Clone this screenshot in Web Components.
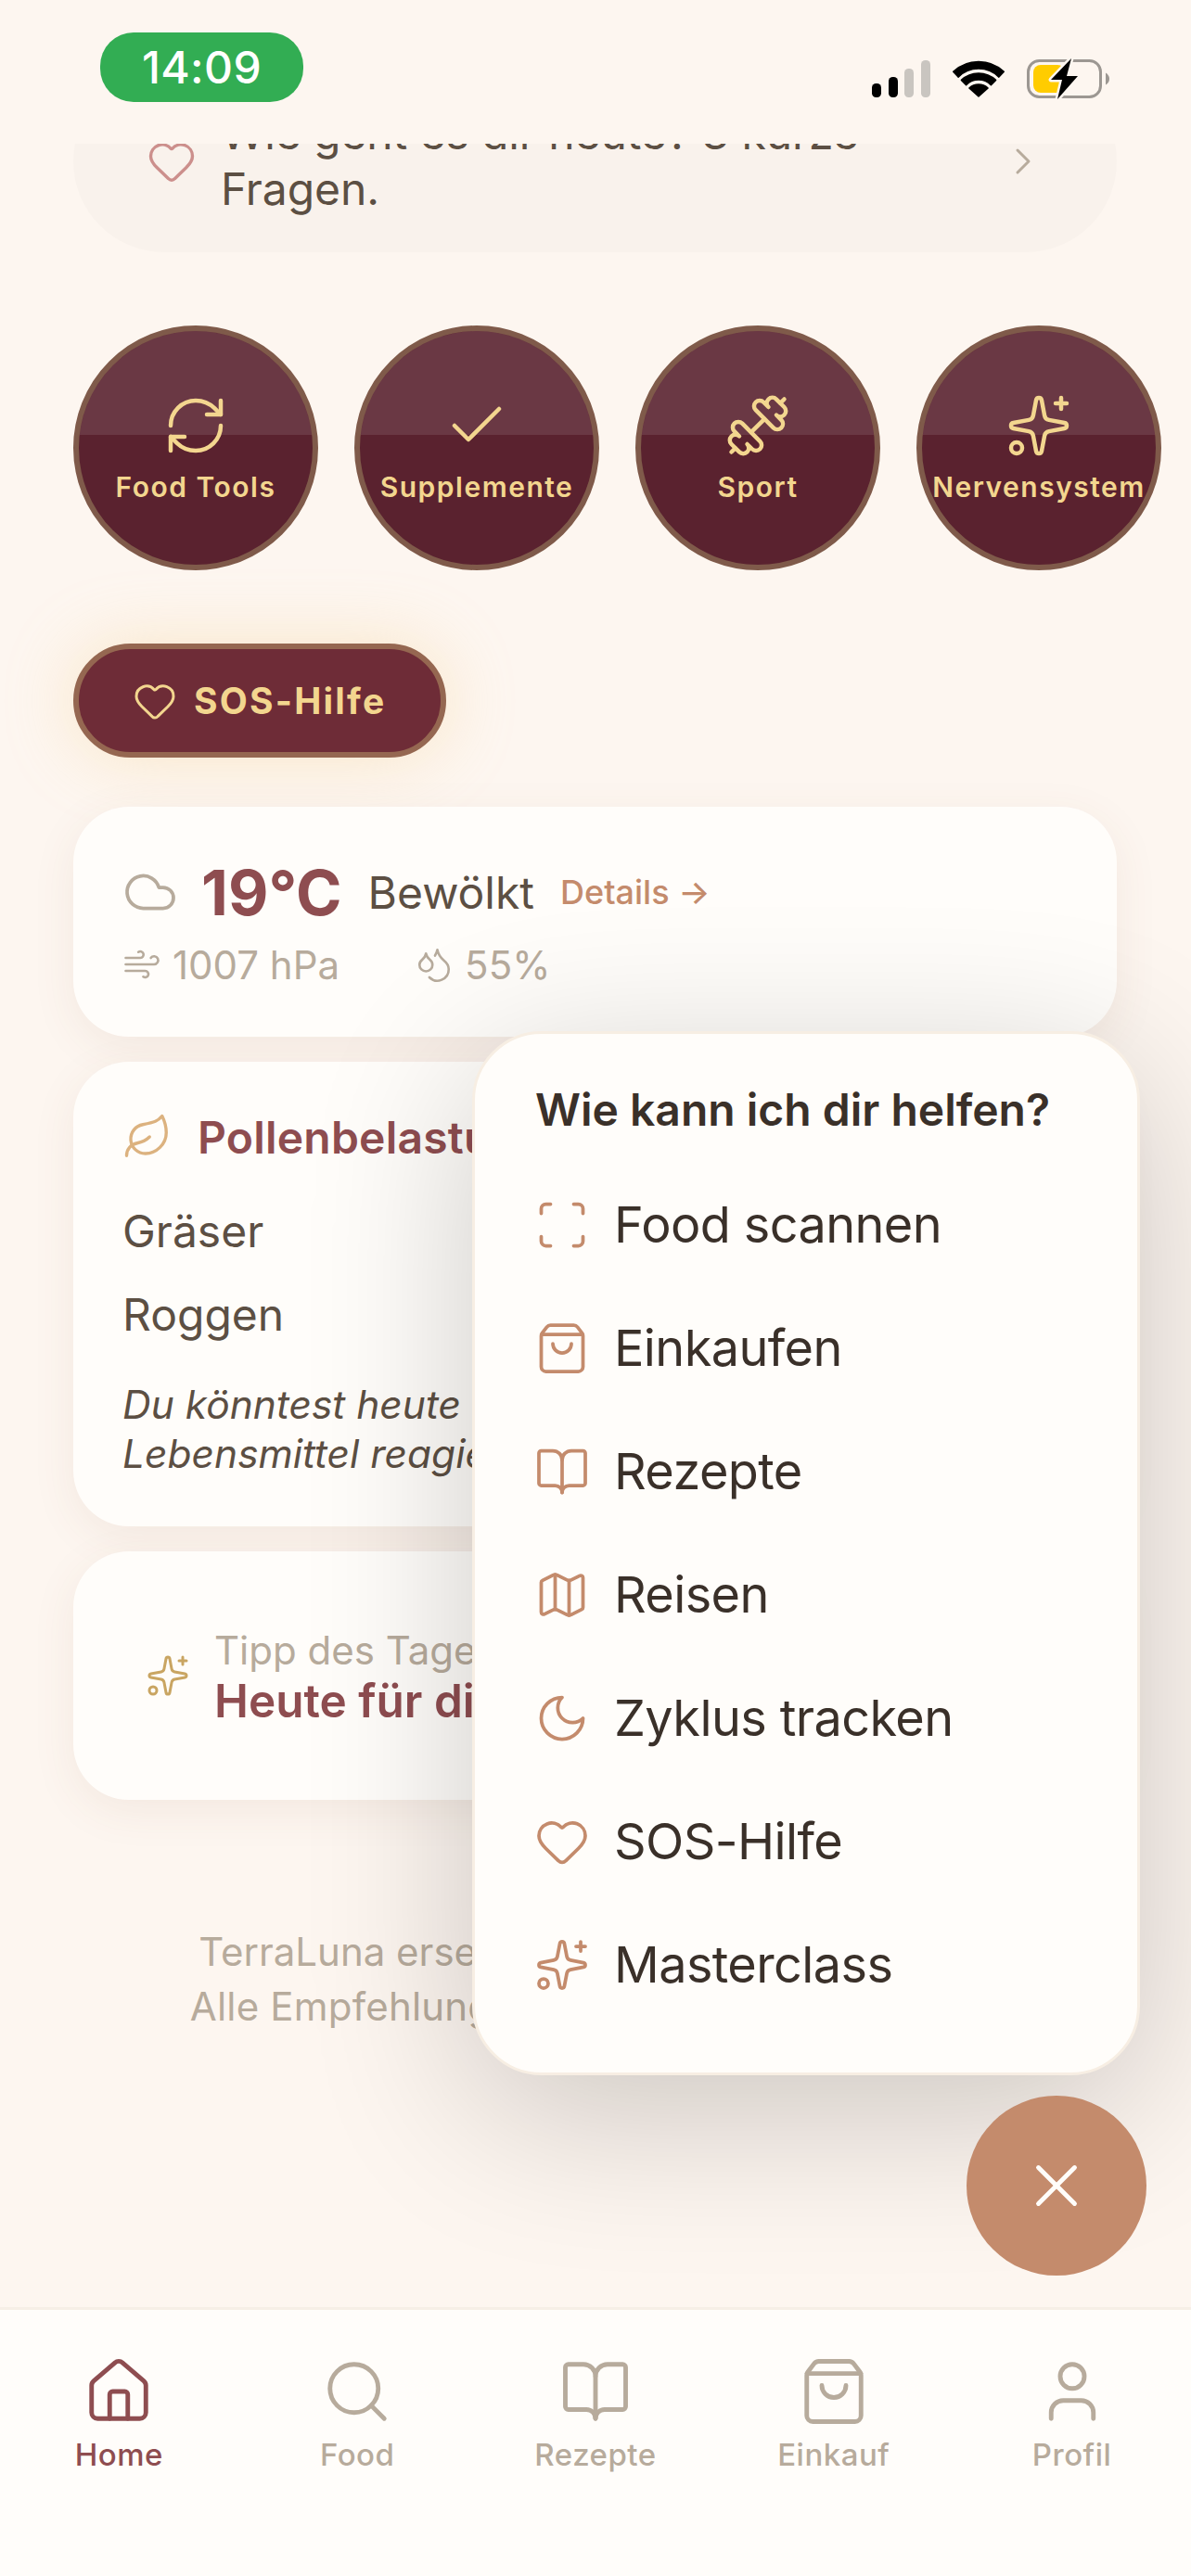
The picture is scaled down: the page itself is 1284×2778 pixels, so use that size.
<!DOCTYPE html>
<html lang="de">
<head>
<meta charset="utf-8">
<title>TerraLuna</title>
<style>
    html, body { margin: 0; padding: 0; background: #fdf6f0; }
    body { font-family: Inter, "Liberation Sans", sans-serif; }
</style>
</head>
<body>
<app-shell>
    <status-bar></status-bar>
    <main-view>
        <prompt-card>Wie geht es dir heute? 3 kurze Fragen.</prompt-card>
        <tool-row>
            <tool-circle icon="refresh">Food Tools</tool-circle>
            <tool-circle icon="check">Supplemente</tool-circle>
            <tool-circle icon="dumbbell">Sport</tool-circle>
            <tool-circle icon="sparkles">Nervensystem</tool-circle>
        </tool-row>
        <sos-button>SOS-Hilfe</sos-button>
        <weather-card></weather-card>
        <pollen-card></pollen-card>
        <tip-card></tip-card>
        <legal-note></legal-note>
    </main-view>
    <bottom-nav>
        <nav-item icon="house" active>Home</nav-item>
        <nav-item icon="search">Food</nav-item>
        <nav-item icon="book">Rezepte</nav-item>
        <nav-item icon="bag">Einkauf</nav-item>
        <nav-item icon="user">Profil</nav-item>
    </bottom-nav>
    <fab-menu title-text="Wie kann ich dir helfen?">
        <menu-item icon="scan">Food scannen</menu-item>
        <menu-item icon="bag">Einkaufen</menu-item>
        <menu-item icon="book">Rezepte</menu-item>
        <menu-item icon="map">Reisen</menu-item>
        <menu-item icon="moon">Zyklus tracken</menu-item>
        <menu-item icon="heart">SOS-Hilfe</menu-item>
        <menu-item icon="sparkles">Masterclass</menu-item>
    </fab-menu>
</app-shell>

<script>
const ICONS = {
    refresh: '<path d="M3 12a9 9 0 0 1 9-9 9.75 9.75 0 0 1 6.74 2.74L21 8"/><path d="M21 3v5h-5"/><path d="M21 12a9 9 0 0 1-9 9 9.75 9.75 0 0 1-6.74-2.74L3 16"/><path d="M8 16H3v5"/>',
    check: '<path d="M20 6 9 17l-5-5"/>',
    dumbbell: '<g transform="matrix(-1 0 0 1 24 0)"><path d="M14.4 14.4 9.6 9.6"/><path d="M18.657 21.485a2 2 0 1 1-2.829-2.828l-1.767 1.768a2 2 0 1 1-2.829-2.829l6.364-6.364a2 2 0 1 1 2.829 2.829l-1.768 1.767a2 2 0 1 1 2.828 2.829z"/><path d="m21.5 21.5-1.4-1.4"/><path d="M3.9 3.9 2.5 2.5"/><path d="M6.404 12.768a2 2 0 1 1-2.829-2.829l1.768-1.767a2 2 0 1 1-2.828-2.829l2.828-2.828a2 2 0 1 1 2.829 2.828l1.767-1.768a2 2 0 1 1 2.829 2.829z"/></g>',
    sparkles: '<path d="M11.017 2.814a1 1 0 0 1 1.966 0l1.051 5.558a2 2 0 0 0 1.594 1.594l5.558 1.051a1 1 0 0 1 0 1.966l-5.558 1.051a2 2 0 0 0-1.594 1.594l-1.051 5.558a1 1 0 0 1-1.966 0l-1.051-5.558a2 2 0 0 0-1.594-1.594l-5.558-1.051a1 1 0 0 1 0-1.966l5.558-1.051a2 2 0 0 0 1.594-1.594z"/><path d="M20 2v4"/><path d="M22 4h-4"/><circle cx="4" cy="20" r="2"/>',
    heart: '<path d="M2 9.5a5.5 5.5 0 0 1 9.591-3.676.56.56 0 0 0 .818 0A5.49 5.49 0 0 1 22 9.5c0 2.29-1.5 4-3 5.5l-5.492 5.313a2 2 0 0 1-3 .019L5 15c-1.5-1.5-3-3.2-3-5.5"/>',
    house: '<path d="M15 21v-8a1 1 0 0 0-1-1h-4a1 1 0 0 0-1 1v8"/><path d="M3 10a2 2 0 0 1 .709-1.528l7-5.999a2 2 0 0 1 2.582 0l7 5.999A2 2 0 0 1 21 10v9a2 2 0 0 1-2 2H5a2 2 0 0 1-2-2z"/>',
    search: '<path d="m21 21-4.34-4.34"/><circle cx="11" cy="11" r="8"/>',
    book: '<path d="M12 7v14"/><path d="M3 18a1 1 0 0 1-1-1V4a1 1 0 0 1 1-1h5a4 4 0 0 1 4 4 4 4 0 0 1 4-4h5a1 1 0 0 1 1 1v13a1 1 0 0 1-1 1h-6a3 3 0 0 0-3 3 3 3 0 0 0-3-3z"/>',
    bag: '<path d="M16 10a4 4 0 0 1-8 0"/><path d="M3.103 6.034h17.794"/><path d="M3.4 5.467a2 2 0 0 0-.4 1.2V20a2 2 0 0 0 2 2h14a2 2 0 0 0 2-2V6.667a2 2 0 0 0-.4-1.2l-2-2.667A2 2 0 0 0 17 2H7a2 2 0 0 0-1.6.8z"/>',
    user: '<path d="M19 21v-2a4 4 0 0 0-4-4H9a4 4 0 0 0-4 4v2"/><circle cx="12" cy="7" r="4"/>',
    scan: '<path d="M3 7V5a2 2 0 0 1 2-2h2"/><path d="M17 3h2a2 2 0 0 1 2 2v2"/><path d="M21 17v2a2 2 0 0 1-2 2h-2"/><path d="M7 21H5a2 2 0 0 1-2-2v-2"/>',
    map: '<path d="M14.106 5.553a2 2 0 0 0 1.788 0l3.659-1.83A1 1 0 0 1 21 4.619v12.764a1 1 0 0 1-.553.894l-4.553 2.277a2 2 0 0 1-1.788 0l-4.212-2.106a2 2 0 0 0-1.788 0l-3.659 1.83A1 1 0 0 1 3 19.381V6.618a1 1 0 0 1 .553-.894l4.553-2.277a2 2 0 0 1 1.788 0z"/><path d="M15 5.764v15"/><path d="M9 3.236v15"/>',
    moon: '<path d="M12 3a6 6 0 0 0 9 9 9 9 0 1 1-9-9Z"/>',
    x: '<path d="M18 6 6 18"/><path d="m6 6 12 12"/>',
    cloud: '<path d="M17.5 19H9a7 7 0 1 1 6.71-9h1.79a4.5 4.5 0 1 1 0 9Z"/>',
    wind: '<path d="M12.8 19.6A2 2 0 1 0 14 16H2"/><path d="M17.5 8a2.5 2.5 0 1 1 2 4H2"/><path d="M9.8 4.4A2 2 0 1 1 11 8H2"/>',
    droplets: '<path d="M7 16.3c2.2 0 4-1.83 4-4.05 0-1.16-.57-2.26-1.71-3.19S7.29 6.75 7 5.3c-.29 1.45-1.14 2.84-2.29 3.76S3 11.1 3 12.25c0 2.22 1.8 4.05 4 4.05z"/><path d="M12.56 6.6A10.97 10.97 0 0 0 14 3.02c.5 2.5 2 4.9 4 6.5s3 3.5 3 5.5a6.98 6.98 0 0 1-11.91 4.97"/>',
    leaf: '<path d="M11 20A7 7 0 0 1 9.8 6.1C15.5 5 17 4.48 19 2c1 2 2 4.18 2 8 0 5.5-4.78 10-10 10Z"/><path d="M2 21c0-3 1.85-5.36 5.08-6C9.5 14.52 12 13 13 12"/>',
    chevron: '<path d="m9 18 6-6-6-6"/>'
};

/* base class: sets the shadow root from styles + markup */
class ShadowElement extends HTMLElement {
    constructor() {
        super();
        this.attachShadow({ mode: 'open' });
    }
    connectedCallback() {
        this.shadowRoot.innerHTML = `<style>${this.styles()}</style>${this.markup()}`;
    }
    styles() { return ':host { display: block; }'; }
    markup() { return '<slot></slot>'; }
}

class AppIcon extends ShadowElement {
    styles() {
        const size = this.getAttribute('size') || 72;
        return `:host { display: block; flex: none; width: ${size}px; height: ${size}px; line-height: 0; }
                svg { width: 100%; height: 100%; display: block; overflow: visible; }`;
    }
    markup() {
        const weight = this.getAttribute('weight') || 1.5;
        return `<svg viewBox="0 0 24 24" fill="none" stroke="currentColor" stroke-width="${weight}" stroke-linecap="round" stroke-linejoin="round">${ICONS[this.getAttribute('name')] || ''}</svg>`;
    }
}

class AppShell extends ShadowElement {
    styles() {
        return `:host { display: flex; flex-direction: column; position: relative; width: 1284px; height: 2778px; overflow: hidden; background: #fdf6f0; font-family: Inter, "Liberation Sans", sans-serif; }`;
    }
}

class StatusBar extends ShadowElement {
    styles() {
        return `:host { display: flex; flex: none; height: 155px; justify-content: space-between; align-items: flex-start; padding: 35px 87px 0 108px; box-sizing: border-box; }
                .time { width: 219px; height: 75px; border-radius: 36px; background: #32ad53; color: #fff; font-size: 48px; font-weight: 500; line-height: 75px; letter-spacing: .4px; text-align: center; }
                .icons { display: flex; align-items: flex-start; gap: 24px; margin-top: 26px; }
                svg { display: block; overflow: visible; }`;
    }
    markup() {
        return `
            <div class="time">14:09</div>
            <div class="icons">
                <svg width="63" height="48" viewBox="0 0 63 48">
                    <rect x="0" y="29" width="10" height="15" rx="4.5" fill="#000"/>
                    <rect x="18" y="22" width="10" height="22" rx="4.5" fill="#000"/>
                    <rect x="35" y="13" width="10" height="31" rx="4.5" fill="#c9c5c0"/>
                    <rect x="53" y="4" width="10" height="40" rx="4.5" fill="#c9c5c0"/>
                </svg>
                <svg width="56" height="48" viewBox="0 -4 56 48">
                    <g fill="#000" stroke="#000" stroke-width="1.5" stroke-linejoin="round">
                        <path d="M0.7 12.2A40 40 0 0 1 55.3 12.2L49.9 18.1A31 31 0 0 0 6.1 18.1Z"/>
                        <path d="M9.4 21.4A27 27 0 0 1 46.6 21.4L41.4 26.6A19 19 0 0 0 14.6 26.6Z"/>
                        <path d="M17.9 30A15 15 0 0 1 38.1 30L28 39Z"/>
                    </g>
                </svg>
                <svg width="90" height="48" viewBox="0 0 90 48">
                    <rect x="1.5" y="4.5" width="78" height="39" rx="12" fill="none" stroke="#9c9792" stroke-width="3"/>
                    <path d="M85 17.5 Q89 20 89 24 Q89 28 85 30.5Z" fill="#9c9792"/>
                    <rect x="7" y="9" width="34" height="30" rx="8" fill="#ffcc00"/>
                    <path d="M48 2 26 25H38L33 46 55 21H43Z" fill="#000" stroke="#fdf6f0" stroke-width="5" stroke-linejoin="round" paint-order="stroke"/>
                </svg>
            </div>`;
    }
}

class MainView extends ShadowElement {
    styles() {
        return `:host { display: block; flex: 1; min-height: 0; overflow: hidden; padding: 0 80px 0 79px; }`;
    }
}

class PromptCard extends ShadowElement {
    styles() {
        return `:host { display: flex; align-items: center; gap: 26px; height: 196px; margin-top: -79px; padding: 0 77px 0 79px; box-sizing: border-box; border-radius: 98px; background: #f9f2ec; color: #5c4f43; font-size: 48px; line-height: 60px; }
                .heart { color: #cc8f8c; }
                .chev { color: #b7ab9c; margin-left: auto; }
                .text { flex: 1; max-width: 830px; letter-spacing: -.1px; }`;
    }
    markup() {
        return `<app-icon class="heart" name="heart" size="54"></app-icon>
                <div class="text"><slot></slot></div>
                <app-icon class="chev" name="chevron" size="48"></app-icon>`;
    }
}

class ToolRow extends ShadowElement {
    styles() {
        return `:host { display: flex; gap: 39px; margin-top: 79px; width: 1284px; }`;
    }
}

class ToolCircle extends ShadowElement {
    styles() {
        return `:host { display: flex; flex: none; flex-direction: column; align-items: center; justify-content: center; gap: 12px; position: relative; overflow: hidden; width: 264px; height: 264px; box-sizing: border-box; border: 6px solid #7f5a4a; border-radius: 50%; background: #5a222f; color: #f3d68f; }
                .sheen { position: absolute; left: 0; right: 0; top: 0; height: 112px; background: rgba(255,255,255,.1); }
                app-icon { position: relative; }
                .label { position: relative; font-size: 30px; font-weight: 600; line-height: 36px; letter-spacing: 1.5px; white-space: nowrap; }`;
    }
    markup() {
        return `<div class="sheen"></div>
                <app-icon name="${this.getAttribute('icon')}" size="72"></app-icon>
                <div class="label"><slot></slot></div>`;
    }
}

class SosButton extends ShadowElement {
    styles() {
        return `:host { display: flex; align-items: center; gap: 18px; width: 402px; height: 123px; margin-top: 79px; padding-left: 58px; box-sizing: border-box; border: 6px solid #956751; border-radius: 62px; background: #6e2c37; color: #f3d68f; font-size: 39px; font-weight: 700; letter-spacing: 2.2px; box-shadow: 0 0 72px rgba(244,208,140,.4); }`;
    }
    markup() {
        return `<app-icon name="heart" size="48"></app-icon><span><slot></slot></span>`;
    }
}

const CARD_CSS = `:host { display: block; box-sizing: border-box; margin-top: 27px; border-radius: 60px; background: #fffdfa; box-shadow: 0 12px 48px rgba(130,80,50,.08); }`;

class WeatherCard extends ShadowElement {
    styles() {
        return `${CARD_CSS}
                :host { height: 248px; margin-top: 53px; padding: 56px 53px 0; color: #5c4f43; }
                .top, .meta, .group { display: flex; align-items: center; }
                .top { height: 72px; }
                .cloud { color: #b7ab9c; margin-right: 25px; }
                .temp { font-size: 67px; font-weight: 700; color: #8e4d50; margin-right: 28px; }
                .cond { font-size: 48px; margin-right: 28px; }
                .more { font-size: 36px; font-weight: 500; color: #c48b6c; }
                .meta { margin-top: 15px; height: 54px; font-size: 42px; color: #b7ab9c; }
                .group { gap: 12px; }
                .group + .group { margin-left: 81px; }`;
    }
    markup() {
        return `<div class="top">
                    <app-icon class="cloud" name="cloud" size="60"></app-icon>
                    <span class="temp">19°C</span>
                    <span class="cond">Bewölkt</span>
                    <span class="more">Details →</span>
                </div>
                <div class="meta">
                    <div class="group"><app-icon name="wind" size="42"></app-icon><span>1007 hPa</span></div>
                    <div class="group"><app-icon name="droplets" size="42"></app-icon><span>55%</span></div>
                </div>`;
    }
}

class PollenCard extends ShadowElement {
    styles() {
        return `${CARD_CSS}
                :host { height: 501px; padding: 54px 53px 0; color: #5c4f43; }
                .head { display: flex; align-items: center; gap: 27px; height: 54px; font-size: 48px; font-weight: 600; letter-spacing: .2px; color: #8e4d50; }
                .leaf { color: #dcb27f; }
                .rows { display: flex; flex-direction: column; gap: 36px; margin-top: 48px; font-size: 48px; line-height: 54px; }
                .note { margin-top: 43px; font-size: 42.5px; font-style: italic; line-height: 53px; }`;
    }
    markup() {
        return `<div class="head"><app-icon class="leaf" name="leaf" size="54"></app-icon><span>Pollenbelastung</span></div>
                <div class="rows"><div>Gräser</div><div>Roggen</div></div>
                <div class="note">Du könntest heute sensibler auf bestimmte Lebensmittel reagieren.</div>`;
    }
}

class TipCard extends ShadowElement {
    styles() {
        return `${CARD_CSS}
                :host { display: flex; align-items: center; gap: 26px; height: 268px; padding: 0 78px; }
                .spark { color: #c9a562; }
                .small { font-size: 42px; line-height: 55px; color: #b7ab9c; }
                .big { font-size: 49.5px; font-weight: 600; line-height: 55px; color: #8e4d50; }`;
    }
    markup() {
        return `<app-icon class="spark" name="sparkles" size="48"></app-icon>
                <div><div class="small">Tipp des Tages</div><div class="big">Heute für dich</div></div>`;
    }
}

class LegalNote extends ShadowElement {
    styles() {
        return `:host { display: block; margin-top: 135px; font-size: 42px; line-height: 58.5px; color: #b7ab9c; text-align: center; white-space: nowrap; }
                .wide { letter-spacing: .2px; }`;
    }
    markup() {
        return `<div>TerraLuna ersetzt keine ärztliche Beratung.</div>
                <div class="wide">Alle Empfehlungen ohne Gewähr auf Erfolg.</div>`;
    }
}

class BottomNav extends ShadowElement {
    styles() {
        return `:host { display: grid; flex: none; grid-template-columns: repeat(5, 1fr); height: 290px; padding-top: 49px; box-sizing: border-box; border-top: 3px solid #f6efe6; background: #fffdfa; }`;
    }
}

class NavItem extends ShadowElement {
    styles() {
        return `:host { display: flex; flex-direction: column; align-items: center; gap: 9px; color: ${this.hasAttribute('active') ? '#8e4d50' : '#b7ab9c'}; }
                .label { font-size: 33px; font-weight: 500; line-height: 40px; letter-spacing: .5px; }`;
    }
    markup() {
        return `<app-icon name="${this.getAttribute('icon')}" size="78"></app-icon><div class="label"><slot></slot></div>`;
    }
}

class FabMenu extends ShadowElement {
    styles() {
        return `:host { display: block; }
                .panel { position: absolute; left: 509px; top: 1112px; width: 720px; height: 1126px; box-sizing: border-box; padding: 55px 0 0 65px; border: 3px solid #f7eee3; border-radius: 75px; background: #fffdfa; box-shadow: 0 40px 180px rgba(0,0,0,.2); }
                .title { height: 54px; margin-bottom: 30px; font-size: 48px; font-weight: 600; line-height: 54px; color: #3a3029; }
                .fab { position: absolute; left: 1042px; top: 2260px; display: flex; align-items: center; justify-content: center; width: 194px; height: 194px; border-radius: 50%; background: #c48b6c; color: #fffdfa; }`;
    }
    markup() {
        return `<div class="panel">
                    <div class="title">${this.getAttribute('title-text')}</div>
                    <slot></slot>
                </div>
                <div class="fab"><app-icon name="x" size="78"></app-icon></div>`;
    }
}

class MenuItem extends ShadowElement {
    styles() {
        return `:host { display: flex; align-items: center; gap: 26px; height: 133px; margin-left: -1px; font-size: 54px; letter-spacing: -.6px; color: #3a3029; }
                app-icon { color: #c48b6c; }`;
    }
    markup() {
        return `<app-icon name="${this.getAttribute('icon')}" size="60"></app-icon><span><slot></slot></span>`;
    }
}

customElements.define('app-icon', AppIcon);
customElements.define('app-shell', AppShell);
customElements.define('status-bar', StatusBar);
customElements.define('main-view', MainView);
customElements.define('prompt-card', PromptCard);
customElements.define('tool-row', ToolRow);
customElements.define('tool-circle', ToolCircle);
customElements.define('sos-button', SosButton);
customElements.define('weather-card', WeatherCard);
customElements.define('pollen-card', PollenCard);
customElements.define('tip-card', TipCard);
customElements.define('legal-note', LegalNote);
customElements.define('bottom-nav', BottomNav);
customElements.define('nav-item', NavItem);
customElements.define('fab-menu', FabMenu);
customElements.define('menu-item', MenuItem);
</script>
</body>
</html>
